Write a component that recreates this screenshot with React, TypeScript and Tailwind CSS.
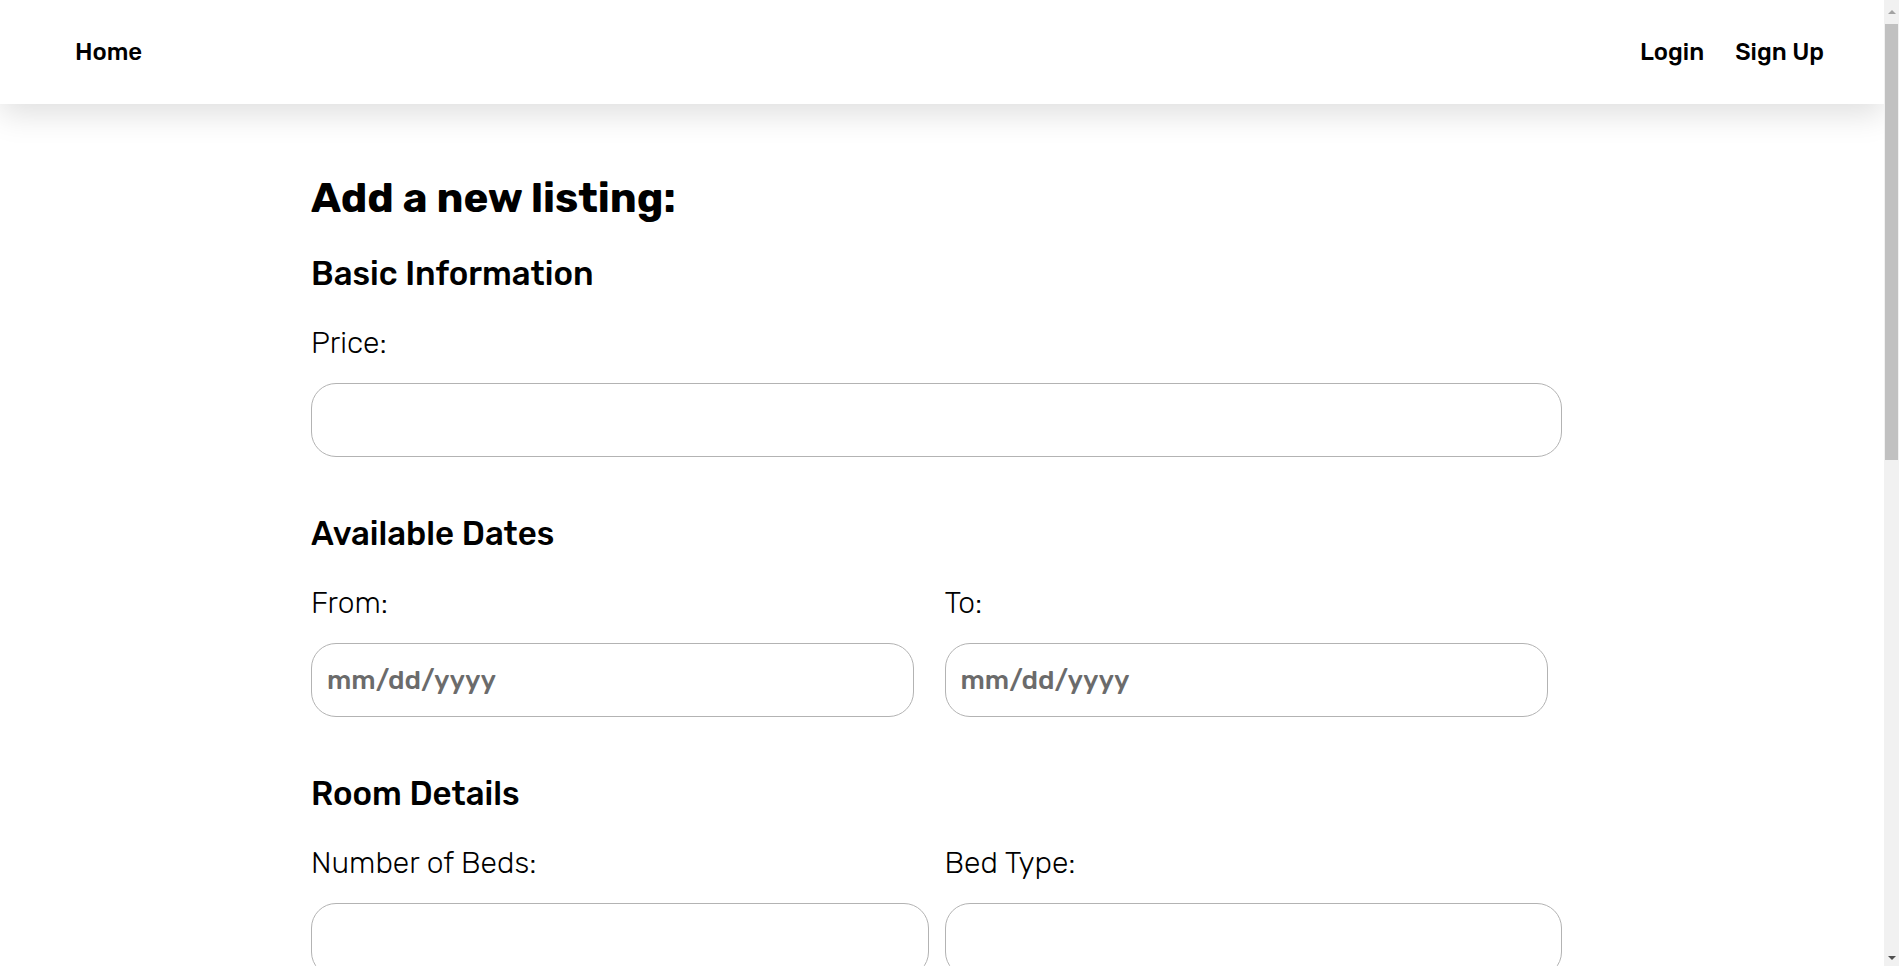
import React from 'react';

const font = { fontFamily: 'Rubik, Inter, "Noto Sans", sans-serif' };

const Field = ({ label, placeholder, narrow }: { label: string; placeholder?: string; narrow?: boolean }) => (
  <div className="flex flex-col">
    <label className="text-[30px] leading-[34px] font-light text-black">{label}</label>
    <input
      type="text"
      placeholder={placeholder}
      className={`mt-[23px] h-[74px] ${narrow ? 'w-[603px]' : 'w-full'} rounded-[25px] border border-[#b3b3b3] bg-white px-[15px] text-[27px] font-medium text-black outline-none placeholder:text-[#6b6b6b]`}
    />
  </div>
);

const Section = ({ title, first, children }: { title: string; first?: boolean; children: React.ReactNode }) => (
  <section className={first ? 'mt-[32px]' : 'mt-[57px]'}>
    <h2 className="text-[33px] leading-[40px] font-medium text-black">{title}</h2>
    <div className="mt-[32px]">{children}</div>
  </section>
);

export default function App() {
  return (
    <div className="min-h-screen bg-white text-black" style={font}>
      <div className="mr-[15px]">
        <nav className="flex h-[104px] items-center justify-between bg-white pl-[75px] pr-[60px] shadow-[0_10px_30px_rgba(0,0,0,0.13)]">
          <a href="#" className="text-[24px] font-medium text-black">Home</a>
          <div className="flex items-center gap-[31px]">
            <a href="#" className="text-[24px] font-medium text-black">Login</a>
            <a href="#" className="text-[24px] font-medium text-black">Sign Up</a>
          </div>
        </nav>

        <main className="mx-auto w-[1262px] pb-[80px] pt-[70px]">
          <div className="w-[1251px]">
            <h1 className="text-[42px] leading-[48px] font-bold">Add a new listing:</h1>

            <Section title="Basic Information" first>
              <Field label="Price:" />
            </Section>

            <Section title="Available Dates">
              <div className="grid grid-cols-2 gap-4">
                <Field label="From:" placeholder="mm/dd/yyyy" narrow />
                <Field label="To:" placeholder="mm/dd/yyyy" narrow />
              </div>
            </Section>

            <Section title="Room Details">
              <div className="grid grid-cols-2 gap-x-4 gap-y-[40px]">
                <Field label="Number of Beds:" />
                <Field label="Bed Type:" />
                <Field label="Number of Bedrooms:" />
                <Field label="Number of Bathrooms:" />
              </div>
            </Section>

            <Section title="Location">
              <div className="flex flex-col gap-[40px]">
                <Field label="Address:" />
                <Field label="City:" />
              </div>
            </Section>

            <Section title="Description">
              <Field label="Tell guests about your place:" />
            </Section>

            <button className="mt-[56px] h-[64px] w-[220px] rounded-[25px] bg-black text-[24px] font-medium text-white">
              Submit
            </button>
          </div>
        </main>
      </div>

      {/* scrollbar as drawn in the screenshot */}
      <div className="fixed right-0 top-0 flex h-screen w-[15px] flex-col items-center bg-[#f1f1f1]">
        <div className="flex h-[24px] w-full items-center justify-center">
          <div className="h-0 w-0 border-x-[4px] border-b-[4px] border-x-transparent border-b-[#a3a3a3]" />
        </div>
        <div className="h-[436px] w-[13px] bg-[#c1c1c1]" />
        <div className="flex-1" />
        <div className="flex h-[17px] w-full items-center justify-center">
          <div className="h-0 w-0 border-x-[4px] border-t-[4px] border-x-transparent border-t-[#505050]" />
        </div>
      </div>
    </div>
  );
}
